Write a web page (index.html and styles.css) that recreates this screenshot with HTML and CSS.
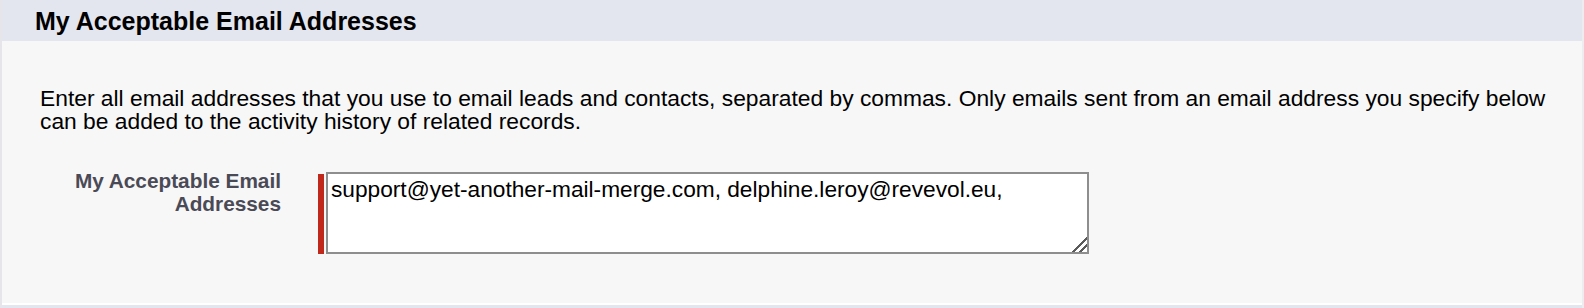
FILE: index.html
```html
<!DOCTYPE html>
<html>
<head>
    <meta charset="utf-8">
    <link rel="stylesheet" href="styles.css">
</head>
<body>
    <div class="page-block">
      <div class="pb-header">
        <h2>My Acceptable Email Addresses</h2>
      </div>
      <div class="pb-body">
        <p class="intro">Enter all email addresses that you use to email leads and contacts, separated by commas. Only emails sent from an email address you specify below can be added to the activity history of related records.</p>
        <div class="field-row">
          <label class="field-label" for="emails">My Acceptable Email Addresses</label>
          <div class="field-value">
            <span class="required-bar"></span>
            <textarea id="emails">support@yet-another-mail-merge.com, delphine.leroy@revevol.eu,</textarea>
          </div>
        </div>
      </div>
    </div>
</body>
</html>
```

FILE: styles.css
```css
* {
margin: 0;
padding: 0;
box-sizing: border-box;
}

body {
font-family: "Liberation Sans", Arial, sans-serif;
background-color: #ffffff;
color: #000000;
}

.page-block {
width: 1584px;
height: 308px;
background-color: #e3e6ef;
border-left: 2px solid #e6e6ea;
border-right: 2px solid #ededf0;
padding-bottom: 3px;
}

.pb-header {
height: 41px;
display: flex;
align-items: center;
padding-left: 33px;
}

.pb-header h2 {
font-size: 25px;
font-weight: bold;
line-height: 28px;
}

.pb-body {
height: 264px;
background-color: #f7f7f7;
border-bottom: 2px solid #ffffff;
padding: 46px 20px 0 38px;
}

.intro {
font-size: 22.8px;
line-height: 23px;
}

.field-row {
display: flex;
margin-top: 36px;
}

.field-label {
width: 241px;
text-align: right;
font-size: 20.8px;
font-weight: bold;
line-height: 23px;
color: #4a4a56;
}

.field-value {
display: flex;
margin-left: 37px;
}

.required-bar {
width: 6px;
height: 80px;
margin-top: 5px;
background-color: #c0281b;
}

textarea {
width: 763px;
height: 82px;
margin-top: 3px;
margin-left: 2px;
border: 2px solid #8e8e8e;
font-family: "Liberation Sans", Arial, sans-serif;
font-size: 22.7px;
color: #000000;
padding: 2px 3px;
resize: both;
}

textarea::-webkit-resizer {
background-color: #ffffff;
background-image: linear-gradient(135deg, transparent 48%, #5a5a5a 48%, #5a5a5a 57%, transparent 57%, transparent 72%, #5a5a5a 72%, #5a5a5a 81%, transparent 81%);
}
```
